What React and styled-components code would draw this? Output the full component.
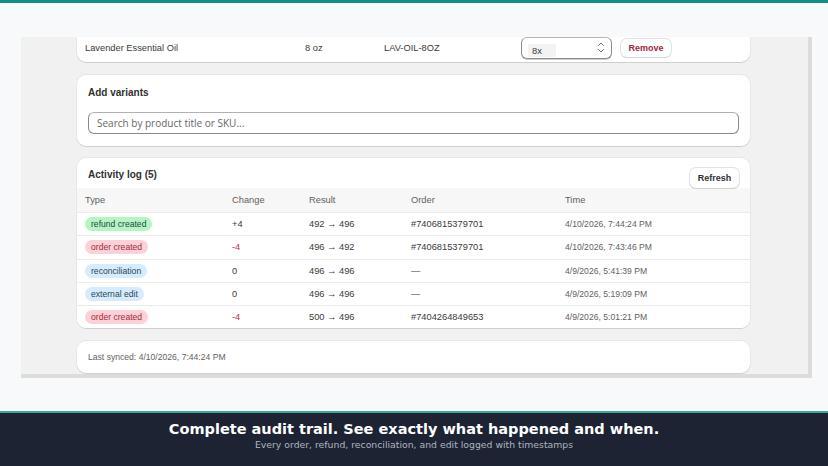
import React from "react";
import styled, { createGlobalStyle } from "styled-components";

const Global = createGlobalStyle`
  html, body { margin: 0; padding: 0; }
  body { background: #f7f9fa; font-family: "Liberation Sans", Arial, sans-serif; color: #303030; }
  * { box-sizing: border-box; }
`;

const Page = styled.div`
  width: 828px;
  height: 466px;
  display: flex;
  flex-direction: column;
  overflow: hidden;
`;

const TopBar = styled.div`
  height: 3px;
  background: #12907f;
  flex: none;
`;

const Stage = styled.div`
  flex: 1;
  padding: 34px 16px 33px 21px;
  display: flex;
`;

const Frame = styled.div`
  flex: 1;
  background: #f1f1f1;
  border-right: 4px solid #dcdcdc;
  border-bottom: 4px solid #dcdcdc;
  overflow: hidden;
  padding: 0 58px 0 56px;
  display: flex;
  flex-direction: column;
  gap: 13px;
`;

const Card = styled.div`
  background: #fff;
  border-radius: 9px;
  box-shadow: 0 1px 0 rgba(0, 0, 0, 0.1), 0 0 0 1px rgba(0, 0, 0, 0.04);
  flex: none;
`;

const ItemCard = styled(Card)`
  height: 35px;
  margin-top: -10px;
  padding: 6px 8px 0;
  display: grid;
  grid-template-columns: 220px 79px 137px 91px 1fr;
  align-items: center;
  font-size: 9.3px;
  color: #3a3a3a;
`;

const Select = styled.div`
  height: 22px;
  width: 91px;
  border: 1px solid #8a8a8a;
  border-top-color: #b5b5b5;
  border-radius: 6px;
  box-shadow: 0 1px 0 #cfcfcf;
  display: flex;
  align-items: center;
  justify-content: space-between;
  padding: 0 6px;
`;

const SelectValue = styled.span`
  background: #f3f3f3;
  padding: 2px 14px 1px 4px;
  font-size: 9.3px;
  margin-top: 5px;
`;

const Remove = styled.button`
  justify-self: start;
  margin-left: 9px;
  width: 50px;
  height: 18px;
  border: none;
  border-radius: 6px;
  background: #fff;
  box-shadow: 0 1px 0 #d4d4d4, 0 0 0 1px #e3e3e3;
  color: #a02a3b;
  font-family: "Liberation Sans", Arial, sans-serif;
  font-weight: 700;
  font-size: 9px;
  padding: 0;
`;

const Section = styled(Card)`
  padding: 12px 11px 12px;
  display: flex;
  flex-direction: column;
  gap: 13px;
`;

const Title = styled.h2`
  margin: 0;
  font-size: 10px;
  line-height: 12px;
  font-weight: 700;
  color: #303030;
`;

const Search = styled.div`
  height: 22px;
  border: 1px solid #8a8a8a;
  border-top-color: #b0b0b0;
  border-radius: 6px;
  display: flex;
  align-items: center;
  padding: 0 8px;
  font-family: "Open Sans", "Noto Sans", sans-serif;
  font-size: 10px;
  color: #666;
`;

const LogCard = styled(Card)`
  overflow: hidden;
  margin-top: -1px;
`;

const LogHead = styled.div`
  height: 30px;
  padding: 10px 11px 0;
  display: flex;
  justify-content: space-between;
  align-items: flex-start;
`;

const LogTitle = styled(Title)`
  line-height: 14px;
`;

const Refresh = styled.button`
  width: 49px;
  height: 20px;
  border: none;
  border-radius: 6px;
  background: #fff;
  box-shadow: 0 1px 0 #d0d0d0, 0 0 0 1px #e3e3e3;
  color: #303030;
  font-family: "Liberation Sans", Arial, sans-serif;
  font-weight: 700;
  font-size: 9px;
  padding: 0;
`;

const Row = styled.div`
  display: grid;
  grid-template-columns: 147px 77px 102px 154px 1fr;
  align-items: center;
  padding: 0 8px;
  height: ${(p) => (p.$head ? "24px" : "23.3px")};
  background: ${(p) => (p.$head ? "#f7f7f7" : "#fff")};
  border-top: ${(p) => (p.$head ? "none" : "1px solid #ebebeb")};
  font-size: 9.3px;
  color: ${(p) => (p.$head ? "#616161" : "#3a3a3a")};
`;

const Cell = styled.span`
  color: ${(p) => p.$color || "inherit"};
  font-size: ${(p) => p.$size || "inherit"};
`;

const tones = {
  green: { bg: "#b4f5c6", fg: "#1f4a38" },
  red: { bg: "#fdd1d8", fg: "#a12a3c" },
  blue: { bg: "#d6ecfe", fg: "#2b4556" },
};

const Badge = styled.span`
  justify-self: start;
  background: ${(p) => tones[p.$tone].bg};
  color: ${(p) => tones[p.$tone].fg};
  border-radius: 7px;
  height: 14px;
  line-height: 14px;
  padding: 0 6px;
  font-size: 8.6px;
`;

const SyncCard = styled(Card)`
  height: 32px;
  padding: 0 11px;
  display: flex;
  align-items: center;
  font-size: 8.6px;
  color: #616161;
`;

const Banner = styled.div`
  flex: none;
  height: 55px;
  border-top: 2px solid #3aa898;
  background: #1d2333;
  display: flex;
  flex-direction: column;
  align-items: center;
  padding-top: 7px;
  font-family: "DejaVu Sans", sans-serif;
`;

const Headline = styled.div`
  color: #fff;
  font-weight: 700;
  font-size: 14.5px;
  line-height: 18px;
`;

const Sub = styled.div`
  color: #aeb5c0;
  font-size: 9.3px;
  line-height: 13px;
`;

const Chevrons = () => (
  <svg width="8" height="11" viewBox="0 0 8 11" fill="none" stroke="#777" strokeWidth="1" strokeLinecap="round" strokeLinejoin="round">
    <path d="M1.5 3.5 L4 1 L6.5 3.5" />
    <path d="M1.5 7.5 L4 10 L6.5 7.5" />
  </svg>
);

const log = [
  { type: "refund created", tone: "green", change: "+4", result: "492 → 496", order: "#7406815379701", time: "4/10/2026, 7:44:24 PM" },
  { type: "order created", tone: "red", change: "-4", neg: true, result: "496 → 492", order: "#7406815379701", time: "4/10/2026, 7:43:46 PM" },
  { type: "reconciliation", tone: "blue", change: "0", result: "496 → 496", order: "—", time: "4/9/2026, 5:41:39 PM" },
  { type: "external edit", tone: "blue", change: "0", result: "496 → 496", order: "—", time: "4/9/2026, 5:19:09 PM" },
  { type: "order created", tone: "red", change: "-4", neg: true, result: "500 → 496", order: "#7404264849653", time: "4/9/2026, 5:01:21 PM" },
];

export default function App() {
  return (
    <Page>
      <Global />
      <TopBar />
      <Stage>
        <Frame>
          <ItemCard>
            <span>Lavender Essential Oil</span>
            <span>8 oz</span>
            <span>LAV-OIL-8OZ</span>
            <Select>
              <SelectValue>8x</SelectValue>
              <Chevrons />
            </Select>
            <Remove>Remove</Remove>
          </ItemCard>
          <Section>
            <Title>Add variants</Title>
            <Search>Search by product title or SKU...</Search>
          </Section>
          <LogCard>
            <LogHead>
              <LogTitle>Activity log (5)</LogTitle>
              <Refresh>Refresh</Refresh>
            </LogHead>
            <Row $head>
              <span>Type</span>
              <span>Change</span>
              <span>Result</span>
              <span>Order</span>
              <span>Time</span>
            </Row>
            {log.map((r, i) => (
              <Row key={i}>
                <Badge $tone={r.tone}>{r.type}</Badge>
                <Cell $color={r.neg ? "#b8324a" : undefined}>{r.change}</Cell>
                <Cell>{r.result}</Cell>
                <Cell>{r.order}</Cell>
                <Cell $color="#616161" $size="8.6px">{r.time}</Cell>
              </Row>
            ))}
          </LogCard>
          <SyncCard>Last synced: 4/10/2026, 7:44:24 PM</SyncCard>
        </Frame>
      </Stage>
      <Banner>
        <Headline>Complete audit trail. See exactly what happened and when.</Headline>
        <Sub>Every order, refund, reconciliation, and edit logged with timestamps</Sub>
      </Banner>
    </Page>
  );
}
